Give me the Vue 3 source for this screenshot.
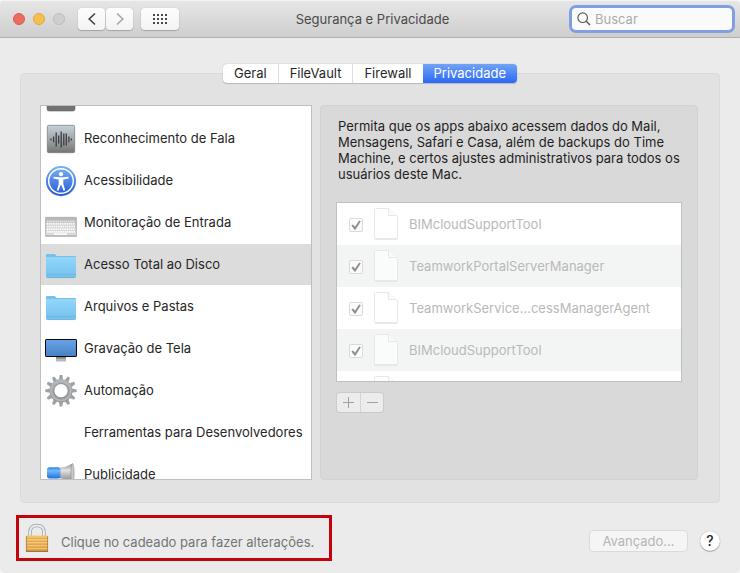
<script setup>
import { ref } from 'vue';

const search = ref('');
const activeTab = ref('Privacidade');
const activeItem = ref('Acesso Total ao Disco');

const tabs = ['Geral', 'FileVault', 'Firewall', 'Privacidade'];

const categories = [
  { name: '', icon: 'dark' },
  { name: 'Reconhecimento de Fala', icon: 'speech' },
  { name: 'Acessibilidade', icon: 'access' },
  { name: 'Monitoração de Entrada', icon: 'keyboard' },
  { name: 'Acesso Total ao Disco', icon: 'folder' },
  { name: 'Arquivos e Pastas', icon: 'folder' },
  { name: 'Gravação de Tela', icon: 'display' },
  { name: 'Automação', icon: 'gear' },
  { name: 'Ferramentas para Desenvolvedores', icon: '' },
  { name: 'Publicidade', icon: 'megaphone' },
];

const apps = [
  { id: 1, name: 'BIMcloudSupportTool', allowed: true },
  { id: 2, name: 'TeamworkPortalServerManager', allowed: true },
  { id: 3, name: 'TeamworkService...cessManagerAgent', allowed: true },
  { id: 4, name: 'BIMcloudSupportTool', allowed: true },
  { id: 5, name: '', allowed: false },
];

// x, half height
const wave = [[6, 1], [8.6, 3], [11.2, 7], [13.7, 4], [16.2, 8], [18.8, 6], [21.3, 6], [23.9, 3], [26.4, 1]];
const teeth = Array.from({ length: 12 }, (_, i) => i * 30);
const gridDots = [0, 4, 8, 12].flatMap((x) => [0, 4, 8].map((y) => ({ x, y })));
const keyRows = [0, 1, 2, 3];
</script>

<template>
  <div class="window">
    <header class="titlebar">
      <div class="titlebar__left">
        <div class="lights">
          <button class="light light--close" aria-label="Fechar"></button>
          <button class="light light--min" aria-label="Minimizar"></button>
          <button class="light light--zoom" aria-label="Zoom" disabled></button>
        </div>
        <div class="nav">
          <button class="tool" aria-label="Voltar">
            <svg width="10" height="14" viewBox="0 0 10 14"><path d="M8 1.5 2.2 7 8 12.5" fill="none" stroke="#4a4a4a" stroke-width="1.7" /></svg>
          </button>
          <button class="tool" aria-label="Avançar" disabled>
            <svg width="10" height="14" viewBox="0 0 10 14"><path d="M2 1.5 7.8 7 2 12.5" fill="none" stroke="#a9a9a9" stroke-width="1.7" /></svg>
          </button>
        </div>
        <button class="tool tool--grid" aria-label="Mostrar Tudo">
          <svg width="14" height="10" viewBox="0 0 14 10">
            <rect v-for="(d, i) in gridDots" :key="i" :x="d.x" :y="d.y" width="2" height="2" fill="#484848" />
          </svg>
        </button>
      </div>
      <h1 class="titlebar__title">Segurança e Privacidade</h1>
      <label class="search">
        <svg width="14" height="14" viewBox="0 0 14 14" fill="none" stroke="#5c5c5c">
          <circle cx="5.7" cy="5.7" r="4.8" stroke-width="1.2" />
          <path d="M9.2 9.2 13 13" stroke-width="1.5" />
        </svg>
        <input v-model="search" type="text" placeholder="Buscar" aria-label="Buscar" />
      </label>
    </header>

    <nav class="tabs">
      <button
        v-for="tab in tabs"
        :key="tab"
        class="tab"
        :class="{ 'is-active': tab === activeTab }"
        @click="activeTab = tab"
      >{{ tab }}</button>
    </nav>

    <main class="pane">
      <ul class="categories">
        <li
          v-for="item in categories"
          :key="item.name"
          class="category"
          :class="{ 'is-selected': item.name === activeItem }"
          @click="activeItem = item.name"
        >
          <svg class="category__icon" width="32" height="33" viewBox="0 0 32 33">
            <rect v-if="item.icon === 'dark'" x="2" y="3" width="28" height="28" rx="2" fill="#727272" stroke="#666" stroke-width=".6" />
            <g v-else-if="item.icon === 'speech'">
              <defs>
                <linearGradient id="speech-bg" x2="0" y2="1">
                  <stop offset="0" stop-color="#c3d1da" />
                  <stop offset=".5" stop-color="#a3a8ab" />
                  <stop offset="1" stop-color="#747474" />
                </linearGradient>
              </defs>
              <rect x="2.3" y="3.3" width="27.4" height="27.4" rx="1.5" fill="url(#speech-bg)" stroke="#737779" stroke-width=".7" />
              <path v-for="[x, h] in wave" :key="x" :d="`M${x} ${17.5 - h}V${17.5 + h}`" stroke="#3a3d3f" stroke-width="1.3" />
            </g>
            <g v-else-if="item.icon === 'access'">
              <defs>
                <linearGradient id="access-bg" x2="0" y2="1">
                  <stop offset="0" stop-color="#7db4f4" />
                  <stop offset="1" stop-color="#2259d8" />
                </linearGradient>
              </defs>
              <circle cx="16" cy="17.5" r="15" fill="#b9bfca" />
              <circle cx="16" cy="17" r="15" fill="url(#access-bg)" />
              <circle cx="16" cy="17" r="12.3" fill="none" stroke="#fff" stroke-width="1.5" />
              <circle cx="16" cy="10.2" r="2.1" fill="#fff" />
              <path d="M8.5 12.7 14 13.2h4l5.5-.5v1.7L18.3 15.5v4.5l1.9 6.3-1.6.5L16.3 21h-.6l-2.3 5.8-1.6-.5L13.7 20v-4.5L8.5 14.4z" fill="#fff" />
            </g>
            <g v-else-if="item.icon === 'keyboard'">
              <defs>
                <linearGradient id="kbd-bg" x2="0" y2="1">
                  <stop offset="0" stop-color="#b5b5b5" />
                  <stop offset="1" stop-color="#dcdcdc" />
                </linearGradient>
              </defs>
              <rect x="0" y="29" width="32" height="2" rx="1" fill="#c6c6c6" />
              <rect x=".3" y="11.3" width="31.4" height="18.4" rx="1" fill="url(#kbd-bg)" stroke="#a2a2a2" stroke-width=".6" />
              <path d="M2 15.2h28" stroke="#f0f0f0" stroke-width="1" stroke-dasharray="1.5 .6" />
              <path
                v-for="r in keyRows"
                :key="r"
                :d="`M${r % 2 ? 2 : 1.5} ${17.8 + r * 2.7}H30`"
                stroke="#fafafa"
                stroke-width="1.9"
                stroke-dasharray="1.7 .5"
              />
              <path d="M9 28.2h13" stroke="#fafafa" stroke-width="1.7" />
            </g>
            <g v-else-if="item.icon === 'folder'">
              <defs>
                <linearGradient id="folder-bg" x2="0" y2="1">
                  <stop offset="0" stop-color="#91d5f9" />
                  <stop offset="1" stop-color="#73c1ee" />
                </linearGradient>
              </defs>
              <path d="M1 29V7.2q0-1.2 1.2-1.2H9q1 0 1.6.7L11.8 8H30q1 0 1 1v20z" fill="#72c2ea" />
              <path d="M1 10h30v18.6q0 1.2-1.2 1.2H2.2Q1 29.8 1 28.6z" fill="url(#folder-bg)" />
              <path d="M1 9.7h30" stroke="#aee1fa" stroke-width=".7" />
              <path d="M1.3 26.5h29.4" stroke="#65b0da" stroke-width=".6" />
              <path d="M2 29.6h28" stroke="#62a9ce" stroke-width=".7" />
            </g>
            <g v-else-if="item.icon === 'display'">
              <defs>
                <linearGradient id="display-bg" x2="0" y2="1">
                  <stop offset="0" stop-color="#68a4e6" />
                  <stop offset="1" stop-color="#4881c5" />
                </linearGradient>
              </defs>
              <path d="M11 25h10v4.5H11z" fill="#b9b9b9" />
              <path d="M11 25h10v1.6H11z" fill="#858585" />
              <rect x=".5" y="7.5" width="31" height="17" rx=".6" fill="url(#display-bg)" stroke="#080808" />
            </g>
            <g v-else-if="item.icon === 'gear'">
              <defs>
                <linearGradient id="gear-bg" gradientUnits="userSpaceOnUse" x1="0" y1="1" x2="0" y2="33">
                  <stop offset="0" stop-color="#b9bdbf" />
                  <stop offset="1" stop-color="#8b8f91" />
                </linearGradient>
              </defs>
              <path
                v-for="a in teeth"
                :key="a"
                d="M13.9 6 14.7 1h2.6l.8 5z"
                fill="#9da1a3"
                :transform="`rotate(${a} 16 16.7)`"
              />
              <circle cx="16" cy="16.7" r="9.3" fill="none" stroke="url(#gear-bg)" stroke-width="4.6" />
              <circle cx="16" cy="16.7" r="9.8" fill="none" stroke="#b3b7b9" stroke-width="1.6" />
              <circle cx="16" cy="16.7" r="7.1" fill="none" stroke="#7b7f81" stroke-width=".7" />
            </g>
            <g v-else-if="item.icon === 'megaphone'">
              <defs>
                <linearGradient id="mega-blue" x2="0" y2="1">
                  <stop offset="0" stop-color="#2f83e0" />
                  <stop offset=".3" stop-color="#72bbff" />
                  <stop offset="1" stop-color="#1c71dc" />
                </linearGradient>
                <linearGradient id="mega-gray" x2="0" y2="1">
                  <stop offset="0" stop-color="#929292" />
                  <stop offset=".35" stop-color="#e2e2e2" />
                  <stop offset="1" stop-color="#7c7c7c" />
                </linearGradient>
              </defs>
              <path d="M15 9.5 20 9 27.5 5.5V25L20 21l-5-.5z" fill="url(#mega-gray)" />
              <rect x="2" y="9.3" width="13.5" height="11.2" rx="2.5" fill="url(#mega-blue)" />
              <ellipse cx="27.5" cy="15.3" rx="1.6" ry="9.7" fill="#c9c9c9" stroke="#898989" stroke-width=".6" />
            </g>
          </svg>
          <span>{{ item.name }}</span>
        </li>
      </ul>

      <section class="detail">
        <p class="detail__text">
          Permita que os apps abaixo acessem dados do Mail, Mensagens, Safari e Casa, além de backups do Time Machine, e certos ajustes administrativos para todos os usuários deste Mac.
        </p>
        <ul class="apps">
          <li v-for="app in apps" :key="app.id">
            <label class="app">
              <input type="checkbox" :checked="app.allowed" disabled />
              <svg width="24" height="32" viewBox="0 0 24 32">
                <path d="M.5 1.5q0-1 1-1H14.5L23.5 8.500V30q0 1-1 1h-21q-1 0-1-1z" fill="#fff" fill-opacity=".6" stroke="#e8e8e8" />
                <path d="M14.5.5V7.5h8.500" fill="#fafafa" stroke="#e8e8e8" />
                <path d="M1 31h22" stroke="#dedede" />
              </svg>
              <span>{{ app.name }}</span>
            </label>
          </li>
        </ul>
        <div class="edit">
          <button aria-label="Adicionar" disabled>
            <svg width="11" height="11" viewBox="0 0 11 11"><path d="M0 5.5h11M5.5 0v11" stroke="#a0a0a0" /></svg>
          </button>
          <button aria-label="Remover" disabled>
            <svg width="11" height="11" viewBox="0 0 11 11"><path d="M0 5.5h11" stroke="#a0a0a0" /></svg>
          </button>
        </div>
      </section>
    </main>

    <footer class="footer">
      <button class="lock">
        <svg width="24" height="30" viewBox="0 0 24 30">
          <defs>
            <linearGradient id="lock-bg" x2="0" y2="1">
              <stop offset="0" stop-color="#f5c56b" />
              <stop offset="1" stop-color="#dfa044" />
            </linearGradient>
          </defs>
          <path d="M5 14V9.5Q5 2.5 12 2.5T19 9.5V14" fill="none" stroke="#98a1a8" stroke-width="3.4" />
          <path d="M5 14V9.5Q5 2.5 12 2.5T19 9.5V14" fill="none" stroke="#e6ebee" stroke-width="2" />
          <rect x="1" y="12.5" width="22" height="16" rx="1" fill="url(#lock-bg)" />
          <path d="M1 15.5h22M1 18.5h22M1 21.5h22M1 24.5h22" stroke="#d39a45" stroke-width=".7" />
          <path d="M1 16.3h22M1 19.3h22M1 22.3h22M1 25.3h22" stroke="#fbd891" stroke-width=".7" />
          <path d="M1.4 13v15M22.6 13v15" stroke="#a9742d" stroke-width=".7" />
          <path d="M1 28.3h22" stroke="#8a6230" stroke-width="1" />
        </svg>
        <span>Clique no cadeado para fazer alterações.</span>
      </button>
      <div class="footer__actions">
        <button class="advanced" disabled>Avançado...</button>
        <button class="help" aria-label="Ajuda">?</button>
      </div>
    </footer>
  </div>
</template>

<style>
body {
  margin: 0;
  background: #f7f7f7;
}
</style>

<style scoped>
.window {
  box-sizing: border-box;
  min-height: 100vh;
  border-radius: 5px;
  overflow: hidden;
  background: #ebebeb;
  font-family: Inter, 'Liberation Sans', sans-serif;
  font-size: 13px;
  line-height: 16px;
  color: #262626;
}

button,
input {
  box-sizing: border-box;
  margin: 0;
  padding: 0;
  border: 0;
  font: inherit;
  color: inherit;
}

ul {
  list-style: none;
  margin: 0;
  padding: 0;
}

svg {
  display: block;
  flex: none;
}

.titlebar {
  box-sizing: border-box;
  height: 38px;
  padding: 0 8px 0 13px;
  display: grid;
  grid-template-columns: 1fr auto 1fr;
  align-items: center;
  background: linear-gradient(#e6e6e6, #cecece);
  border-top: 1px solid #f3f3f3;
  border-bottom: 1px solid #b0b0b0;
}

.titlebar__left {
  display: flex;
  align-items: center;
}

.titlebar__title {
  margin: 0;
  font-size: 13px;
  font-weight: 400;
  color: #4a4a4a;
}

.lights {
  display: flex;
  gap: 8px;
  margin-right: 13px;
}

.light {
  width: 12px;
  height: 12px;
  border-radius: 50%;
}

.light--close {
  background: #ec6b5f;
  border: 1px solid #db5c51;
}

.light--min {
  background: #f5bf4f;
  border: 1px solid #dfa73f;
}

.light--zoom {
  background: #cfcfcf;
  border: 1px solid #bcbcbc;
}

.nav {
  display: flex;
  gap: 1px;
  margin-right: 8px;
}

.tool {
  width: 27px;
  height: 22px;
  display: flex;
  align-items: center;
  justify-content: center;
  border-radius: 4px;
  background: linear-gradient(#fdfdfd, #f3f3f3);
  box-shadow: 0 0 1px rgba(0, 0, 0, 0.25), 0 1px 1px rgba(0, 0, 0, 0.2);
}

.tool--grid {
  width: 38px;
}

.search {
  justify-self: end;
  box-sizing: border-box;
  width: 160px;
  height: 22px;
  padding: 0 5px;
  display: flex;
  align-items: center;
  gap: 4px;
  border-radius: 4px;
  background: #fafafa;
  box-shadow: 0 0 0 3px #7f9fe4;
}

.search input {
  min-width: 0;
  flex: 1;
  background: transparent;
  outline: none;
}

.search input::placeholder {
  color: #ababab;
  opacity: 1;
}

.tabs {
  position: relative;
  width: fit-content;
  margin: 26px auto 0;
  display: flex;
  border-radius: 4px;
  background: #fff;
  box-shadow: 0 0 1px rgba(0, 0, 0, 0.35), 0 1px 1px rgba(0, 0, 0, 0.15);
}

.tab {
  height: 19px;
  padding: 0 11px 2px;
  background: transparent;
  border-left: 1px solid #dedede;
}

.tab:first-child {
  border-left: 0;
}

.tab.is-active {
  border-left: 0;
  border-radius: 0 4px 4px 0;
  background: linear-gradient(#72a3f6, #2a69f6);
  color: #fff;
}

.pane {
  margin: -10px 20px 0;
  padding: 31px 21px 22px 19px;
  display: flex;
  gap: 8px;
  border: 1px solid #dadada;
  border-radius: 4px;
  background: #e2e2e2;
}

.categories {
  box-sizing: border-box;
  flex: none;
  width: 272px;
  height: 375px;
  overflow: hidden;
  border: 1px solid #bfbfbf;
  background: #fff;
}

.category {
  display: flex;
  align-items: center;
  gap: 7px;
  height: 41px;
  margin-bottom: 1px;
  padding-left: 4px;
}

.category span {
  padding-bottom: 2px;
}

/* the list rests scrolled past its first rows */
.category:first-child {
  margin-top: -30px;
}

.category.is-selected {
  background: #dcdcdc;
}

.detail {
  flex: 1;
  min-width: 0;
  padding: 12px 15px;
  border: 1px solid #d2d2d2;
  border-radius: 4px;
  background: #d9d9d9;
}

.detail__text {
  margin: 0 2px 20px;
  color: #1f1f1f;
}

.apps {
  height: 178px;
  overflow: hidden;
  border: 1px solid #bfbfbf;
  background: #fff;
}

.apps li:nth-child(even) {
  background: #f3f5f5;
}

.app {
  display: flex;
  align-items: center;
  gap: 11px;
  height: 42px;
  padding-left: 12px;
  color: #b9b9b9;
}

.app input {
  appearance: none;
  width: 14px;
  height: 14px;
  margin-top: 2px;
  display: grid;
  place-items: center;
  border: 1px solid #dadada;
  border-radius: 2px;
  background: #fbfbfb;
}

.app input:checked::before {
  content: '';
  width: 10px;
  height: 10px;
  background: #8e8e8e;
  clip-path: polygon(4% 54%, 20% 44%, 40% 68%, 82% 4%, 98% 12%, 44% 98%, 36% 98%);
}

.edit {
  width: fit-content;
  margin: 11px 0 0 1px;
  display: flex;
  border-radius: 3px;
  background: #ececec;
  box-shadow: 0 0 0 1px #cbcbcb;
}

.edit button {
  width: 23px;
  height: 19px;
  display: flex;
  align-items: center;
  justify-content: center;
  background: transparent;
}

.edit button + button {
  border-left: 1px solid #d5d5d5;
}

.footer {
  display: flex;
  align-items: center;
  justify-content: space-between;
  padding: 12px 20px 12px 16px;
}

.lock {
  width: 316px;
  height: 46px;
  padding-left: 6px;
  display: flex;
  align-items: center;
  gap: 12px;
  border: 3px solid #c1030b;
  background: transparent;
  color: #747474;
}

.lock span {
  padding-top: 8px;
}

.footer__actions {
  display: flex;
  align-items: center;
  gap: 13px;
  padding-top: 6px;
}

.advanced {
  width: 97px;
  height: 20px;
  border-radius: 4px;
  background: #f5f5f5;
  box-shadow: 0 0 0 1px #dadada;
  color: #b5b5b5;
}

.help {
  width: 20px;
  height: 20px;
  border-radius: 50%;
  background: #fff;
  box-shadow: 0 0 1px rgba(0, 0, 0, 0.4), 0 1px 1px rgba(0, 0, 0, 0.25);
  font-size: 14px;
  font-weight: 500;
}
</style>
